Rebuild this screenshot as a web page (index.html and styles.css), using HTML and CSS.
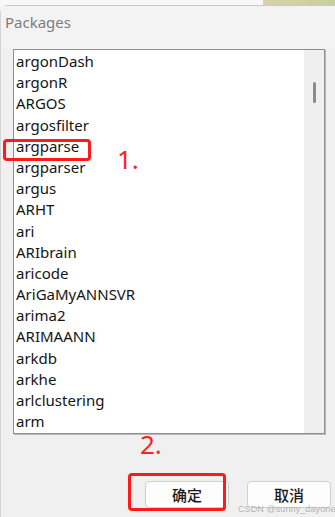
FILE: index.html
```html
<!DOCTYPE html>
<html lang="en">
<head>
    <meta charset="UTF-8">
    <meta name="viewport" content="width=device-width, initial-scale=1.0">
    <title>Packages</title>
    <link rel="stylesheet" href="styles.css">
</head>
<body>
    <div class="backdrop">
        <div class="backdrop-app"></div>
        <div class="backdrop-photo"></div>
    </div>

    <div class="dialog">
        <header class="title-bar">Packages</header>

        <div class="listbox">
            <ul class="package-list">
                <li>argonDash</li>
                <li>argonR</li>
                <li>ARGOS</li>
                <li>argosfilter</li>
                <li class="marked">argparse</li>
                <li>argparser</li>
                <li>argus</li>
                <li>ARHT</li>
                <li>ari</li>
                <li>ARIbrain</li>
                <li>aricode</li>
                <li>AriGaMyANNSVR</li>
                <li>arima2</li>
                <li>ARIMAANN</li>
                <li>arkdb</li>
                <li>arkhe</li>
                <li>arlclustering</li>
                <li>arm</li>
            </ul>
            <div class="scrollbar">
                <div class="thumb"></div>
            </div>
        </div>

        <div class="actions">
            <button class="btn btn-ok">确定</button>
            <button class="btn">取消</button>
        </div>

        <!-- red annotations drawn over the screenshot -->
        <div class="mark mark-item"></div>
        <div class="step step-1">1.</div>
        <div class="step step-2">2.</div>
        <div class="mark mark-ok"></div>
        <div class="watermark">CSDN @sunny_dayone</div>
    </div>
</body>
</html>
```

FILE: styles.css
```css
* {
    margin: 0;
    padding: 0;
    box-sizing: border-box;
}

body {
    width: 335px;
    height: 517px;
    overflow: hidden;
    background-color: #f7f7f7;
    font-family: 'Noto Sans', 'Noto Sans CJK SC', sans-serif;
    color: #151515;
}

.backdrop {
    display: flex;
    height: 5px;
}

.backdrop-app {
    width: 263px;
    background-color: #f8f8f8;
}

.backdrop-photo {
    flex: 1;
    background: linear-gradient(90deg, #d8d2a8, #c9cfa0);
}

.dialog {
    position: relative;
    height: 512px;
    background-color: #f0f0f0;
    border-top: 1px solid #c9c9c9;
    border-left: 1px solid #d4d4d4;
    border-radius: 8px 0 0 0;
}

.title-bar {
    height: 43px;
    padding: 6px 0 0 4px;
    font-size: 15px;
    color: #7d7d7d;
    background-color: #f3f3f3;
}

.listbox {
    display: flex;
    margin-left: 12px;
    width: 312px;
    height: 385px;
    background-color: #fff;
    border: 1px solid #8f8f8f;
    box-shadow: 1px 1px 0 #b8b8b8;
}

.package-list {
    flex: 1;
    list-style: none;
    padding: 1px 0 0 2px;
    overflow: hidden;
}

.package-list li {
    height: 21.2px;
    line-height: 21px;
    font-size: 15px;
    white-space: nowrap;
}

.scrollbar {
    width: 20px;
    background-color: #efefef;
    padding: 32px 0 0 9px;
}

.thumb {
    width: 3px;
    height: 21px;
    border-radius: 2px;
    background-color: #8a8a8a;
}

.actions {
    display: flex;
    justify-content: flex-end;
    gap: 18px;
    padding: 47px 4px 0 0;
}

.btn {
    width: 84px;
    height: 27px;
    background-color: #fdfdfd;
    border: 1px solid #d0d0d0;
    border-radius: 4px;
    font-family: 'Noto Sans CJK SC', sans-serif;
    font-size: 15px;
    font-weight: 500;
    color: #1a1a1a;
}

.mark {
    position: absolute;
    border: 3px solid #ff1a1a;
    border-radius: 4px;
}

.mark-item {
    left: 2px;
    top: 133px;
    width: 88px;
    height: 22px;
}

.mark-ok {
    left: 127px;
    top: 467px;
    width: 98px;
    height: 38px;
}

.step {
    position: absolute;
    font-family: 'Noto Sans', sans-serif;
    font-size: 26px;
    line-height: 1;
    color: #ff2020;
}

.step-1 {
    left: 116px;
    top: 140px;
}

.step-2 {
    left: 139px;
    top: 425px;
}

.watermark {
    position: absolute;
    left: 237px;
    top: 499px;
    font-family: 'Liberation Sans', sans-serif;
    font-size: 9px;
    letter-spacing: 0.1px;
    line-height: 1;
    white-space: nowrap;
    color: rgba(150, 150, 150, 0.7);
}
```
